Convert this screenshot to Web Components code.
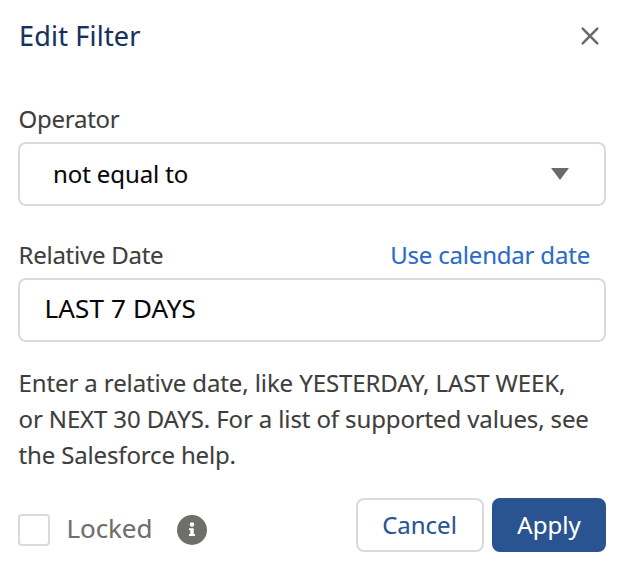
<!DOCTYPE html>
<html lang="en">
<head>
<meta charset="utf-8">
<title>Edit Filter</title>
<style>
  body {
    margin: 0;
    background: #fff;
    color: #3e3e3c;
    font-family: "Noto Sans", "Open Sans", sans-serif;
    font-size: 24px;
    -webkit-text-stroke: 0.1px currentColor;
  }
</style>
</head>
<body>

<filter-dialog heading="Edit Filter">
  <form-field label="Operator">
    <select-box>not equal to</select-box>
  </form-field>
  <form-field label="Relative Date" action="Use calendar date">
    <text-box value="LAST 7 DAYS"></text-box>
  </form-field>
  <help-text>
    <div style="letter-spacing: -0.11px">Enter a relative date, like YESTERDAY, LAST WEEK,</div>
    <div style="letter-spacing: -0.13px">or NEXT 30 DAYS. For a list of supported values, see</div>
    <div style="letter-spacing: -0.15px">the Salesforce help.</div>
  </help-text>
  <lock-option slot="footer">Locked</lock-option>
  <dialog-button slot="footer">Cancel</dialog-button>
  <dialog-button slot="footer" variant="brand">Apply</dialog-button>
</filter-dialog>

<template id="filter-dialog">
  <style>
    :host {
      display: block;
      padding: 0 18px;
    }

    header {
      display: flex;
      align-items: center;
      justify-content: space-between;
      height: 72px;
      padding: 0 6px 0 1px;
      margin-bottom: 24px;
    }

    h2 {
      margin: 0;
      padding-bottom: 1px;
      color: #16325c;
      font-size: 27px;
      font-weight: 400;
      line-height: 36px;
      letter-spacing: 0.2px;
    }

    button {
      display: flex;
      padding: 0;
      border: 0;
      background: none;
    }

    main {
      display: flex;
      flex-direction: column;
      gap: 26px;
    }

    footer {
      display: flex;
      gap: 8px;
      height: 54px;
      margin-top: 25px;
    }
  </style>
  <header>
    <h2></h2>
    <button aria-label="Close">
      <svg width="20" height="20" viewBox="0 0 20 20" fill="none" stroke="#6b6b69" stroke-width="2.6" stroke-linecap="round">
        <path d="M2.7 2.7 17.3 17.3M17.3 2.7 2.7 17.3"/>
      </svg>
    </button>
  </header>
  <main><slot></slot></main>
  <footer><slot name="footer"></slot></footer>
</template>

<template id="form-field">
  <style>
    :host {
      display: block;
    }

    .row {
      display: flex;
      align-items: center;
      justify-content: space-between;
      box-sizing: border-box;
      height: 46px;
      padding: 0 16px 2px 0.5px;
      letter-spacing: -0.25px;
    }

    a {
      color: #2a6cc8;
      letter-spacing: -0.2px;
    }

    a:hover {
      text-decoration: underline;
    }
  </style>
  <div class="row"><label></label><a></a></div>
  <slot></slot>
</template>

<template id="select-box">
  <style>
    :host {
      display: flex;
      align-items: center;
      justify-content: space-between;
      box-sizing: border-box;
      height: 64px;
      padding: 0 35px 0 33px;
      border: 2px solid #dadada;
      border-radius: 8px;
      color: #080707;
    }

    span {
      padding-bottom: 2px;
      letter-spacing: -0.1px;
    }
  </style>
  <span><slot></slot></span>
  <svg width="18" height="12" viewBox="0 0 18 12"><path d="M0 0h18L9 12z" fill="#6b6b69"/></svg>
</template>

<template id="text-box">
  <style>
    :host {
      display: flex;
      align-items: center;
      box-sizing: border-box;
      height: 64px;
      padding: 0 24.5px 4px;
      border: 2px solid #dadada;
      border-radius: 8px;
      color: #080707;
      font-size: 26px;
      letter-spacing: 0.15px;
    }
  </style>
  <span></span>
</template>

<template id="help-text">
  <style>
    :host {
      display: block;
      margin-top: -3px;
      padding-left: 0.5px;
      line-height: 36px;
      white-space: nowrap;
    }
  </style>
  <slot></slot>
</template>

<template id="lock-option">
  <style>
    :host {
      display: flex;
      align-items: center;
      height: 32px;
      margin: 16px auto 0 0;
      color: #706e6b;
      font-size: 26px;
    }

    .box {
      box-sizing: border-box;
      width: 32px;
      height: 32px;
      margin-right: 16.5px;
      border: 2px solid #dadada;
      border-radius: 4px;
    }

    .text {
      padding-bottom: 4px;
      line-height: 32px;
      letter-spacing: -0.1px;
    }

    svg {
      margin-left: 25px;
    }
  </style>
  <span class="box"></span>
  <span class="text"><slot></slot></span>
  <svg width="30" height="30" viewBox="0 0 30 30">
    <circle cx="15" cy="15" r="15" fill="#706e6b"/>
    <circle cx="15" cy="9.5" r="2.2" fill="#fff"/>
    <path d="M12 13.3h4.7v5.7h1.3v2h-6v-2h1.3v-3.7H12z" fill="#fff"/>
  </svg>
</template>

<template id="dialog-button">
  <style>
    :host {
      display: flex;
      align-items: center;
      justify-content: center;
      box-sizing: border-box;
      width: 128px;
      height: 54px;
      padding: 0 1px 2px 0;
      border: 2px solid #dadada;
      border-radius: 8px;
      color: #2a5391;
    }

    :host([variant="brand"]) {
      width: 114px;
      padding-right: 0;
      border-color: #2a5391;
      background: #2a5391;
      color: #fff;
    }
  </style>
  <span><slot></slot></span>
</template>

<script>
  class BaseElement extends HTMLElement {

    constructor() {
      super();
      let template = document.querySelector('#' + this.localName);
      let shadow = this.attachShadow({ mode: 'open' });
      shadow.appendChild(document.importNode(template.content, true));
    }

    setText(selector, text) {
      this.shadowRoot.querySelector(selector).textContent = text || '';
    }

  }

  class FilterDialog extends BaseElement {

    connectedCallback() {
      this.setText('h2', this.getAttribute('heading'));
      this.shadowRoot.querySelector('button').addEventListener('click', () => {
        this.dispatchEvent(new CustomEvent('close'));
      });
    }

  }

  class FormField extends BaseElement {

    connectedCallback() {
      this.setText('label', this.getAttribute('label'));
      this.setText('a', this.getAttribute('action'));
    }

  }

  class TextBox extends BaseElement {

    connectedCallback() {
      this.setText('span', this.getAttribute('value'));
    }

  }

  customElements.define('filter-dialog', FilterDialog);
  customElements.define('form-field', FormField);
  customElements.define('text-box', TextBox);
  customElements.define('select-box', class extends BaseElement {});
  customElements.define('help-text', class extends BaseElement {});
  customElements.define('lock-option', class extends BaseElement {});
  customElements.define('dialog-button', class extends BaseElement {});
</script>
</body>
</html>
